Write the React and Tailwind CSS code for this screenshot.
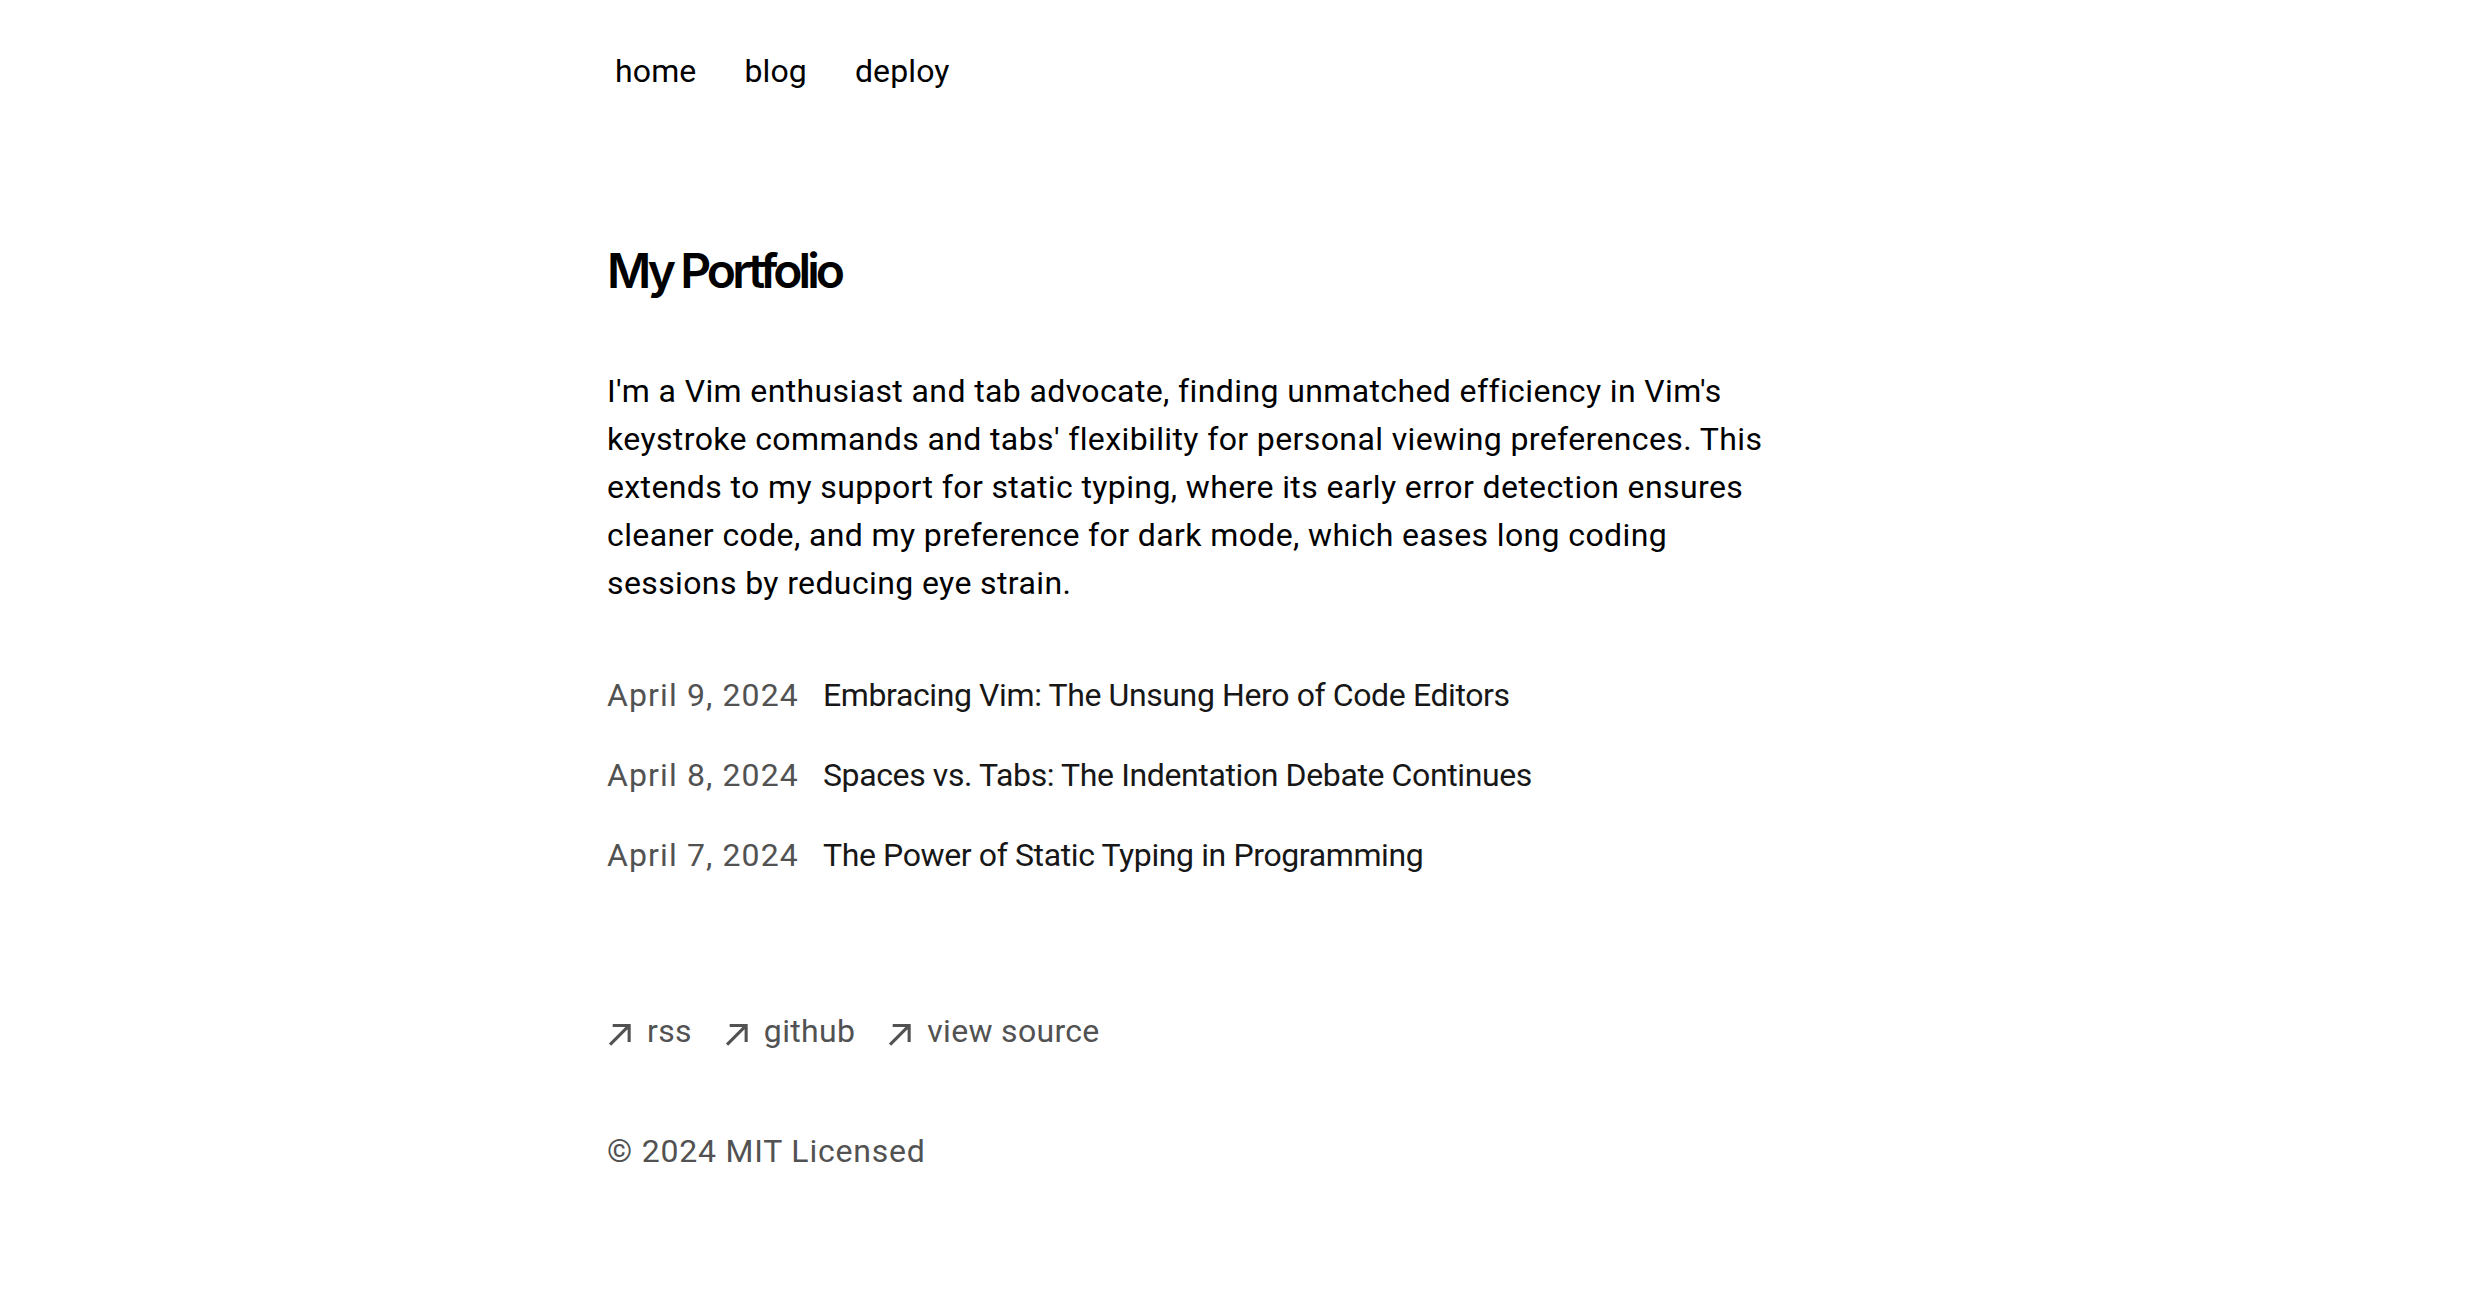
import React from 'react';

// Small arrow used next to footer links
const ArrowIcon = () => (
  <svg width="24" height="24" viewBox="0 0 12 12" fill="none" xmlns="http://www.w3.org/2000/svg">
    <path
      d="M2.07102 11.3494L0.963068 10.2415L9.2017 1.98864H2.83807L2.85227 0.454545H11.8438V9.46023H10.2955L10.3097 3.09659L2.07102 11.3494Z"
      fill="currentColor"
    />
  </svg>
);

const navItems = ['home', 'blog', 'deploy'];

const posts = [
  { date: 'April 9, 2024', title: 'Embracing Vim: The Unsung Hero of Code Editors' },
  { date: 'April 8, 2024', title: 'Spaces vs. Tabs: The Indentation Debate Continues' },
  { date: 'April 7, 2024', title: 'The Power of Static Typing in Programming' },
];

const Navbar = () => (
  <aside className="-ml-[16px] mb-32 tracking-[0.004em]">
    <nav className="flex flex-row items-start relative">
      {navItems.map((item) => (
        <a
          key={item}
          href="#"
          className="flex align-middle relative py-2 px-4 m-2 text-[32px] leading-[48px] hover:text-neutral-800"
        >
          {item}
        </a>
      ))}
    </nav>
  </aside>
);

const BlogPosts = () => (
  <div className="my-16">
    {posts.map((post) => (
      <a key={post.title} href="#" className="flex flex-col mb-8">
        <div className="w-full flex flex-row gap-4">
          <p className="text-neutral-600 w-[200px] shrink-0 tabular-nums tracking-[0.035em]">{post.date}</p>
          <p className="text-neutral-900 tracking-[-0.012em]">{post.title}</p>
        </div>
      </a>
    ))}
  </div>
);

const Footer = () => (
  <footer className="mb-32">
    <ul className="mt-16 flex flex-row gap-8 text-neutral-600 tracking-[0.01em]">
      {['rss', 'github', 'view source'].map((label) => (
        <li key={label}>
          <a href="#" className="flex items-center hover:text-neutral-800">
            <ArrowIcon />
            <p className="ml-4 h-14">{label}</p>
          </a>
        </li>
      ))}
    </ul>
    <p className="mt-16 text-neutral-600 tracking-[0.025em]">© 2024 MIT Licensed</p>
  </footer>
);

export default function App() {
  return (
    <div
      className="min-h-screen bg-white text-black antialiased text-[32px] leading-[48px]"
      style={{ fontFamily: 'Roboto, "Liberation Sans", sans-serif' }}
    >
      <main className="ml-[607px] w-[1190px] pt-[31px] flex flex-col">
        <Navbar />
        <section>
          <h1
            className="mb-16 text-[48px] leading-[64px] font-semibold tracking-[-0.082em]"
            style={{ fontFamily: 'Inter, sans-serif' }}
          >
            My Portfolio
          </h1>
          <p className="mb-8 tracking-[0.012em]">
            I'm a Vim enthusiast and tab advocate, finding unmatched efficiency in Vim's keystroke
            commands and tabs' flexibility for personal viewing preferences. This extends to my support
            for static typing, where its early error detection ensures cleaner code, and my preference
            for dark mode, which eases long coding sessions by reducing eye strain.
          </p>
          <BlogPosts />
        </section>
        <Footer />
      </main>
    </div>
  );
}
